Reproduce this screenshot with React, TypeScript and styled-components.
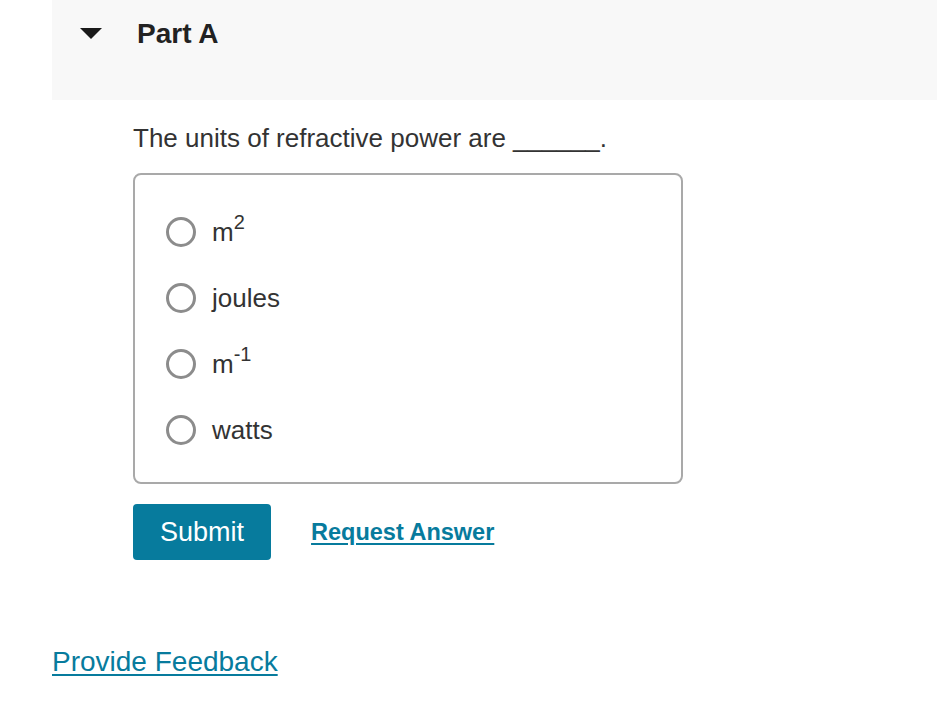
import React from 'react'
import styled, { createGlobalStyle } from 'styled-components'

const GlobalStyle = createGlobalStyle`
  body {
    margin: 0;
    background: #ffffff;
    font-family: "Liberation Sans", Arial, sans-serif;
    color: #333333;
  }
`

const Page = styled.div`
  padding-left: 52px;
`

const PartHeader = styled.div`
  display: flex;
  align-items: flex-start;
  height: 100px;
  box-sizing: border-box;
  padding: 18px 0 0 28px;
  background: #f8f8f8;
`

const Caret = styled.svg`
  width: 22px;
  height: 11px;
  margin-top: 10px;
  flex-shrink: 0;
`

const PartTitle = styled.h2`
  margin: 0 0 0 35px;
  font-size: 28px;
  line-height: 32px;
  font-weight: bold;
  color: #222222;
`

const Body = styled.div`
  padding-left: 81px;
`

const Question = styled.p`
  margin: 22px 0 0;
  font-size: 26px;
  line-height: 32px;
  color: #333333;
`

const Choices = styled.div`
  width: 550px;
  box-sizing: border-box;
  margin-top: 19px;
  padding: 24px 0 19px 31px;
  border: 2px solid #a9a9a9;
  border-radius: 8px;
`

const Choice = styled.label`
  display: flex;
  align-items: center;
  height: 66px;
  font-size: 26px;
  color: #333333;
  cursor: pointer;
`

const Radio = styled.span`
  width: 30px;
  height: 30px;
  box-sizing: border-box;
  border: 3px solid #8c8c8c;
  border-radius: 50%;
  margin-right: 16px;
  flex-shrink: 0;
`

const Sup = styled.sup`
  font-size: 20px;
  line-height: 0;
  vertical-align: 12px;
`

const Actions = styled.div`
  display: flex;
  align-items: center;
  gap: 40px;
  margin-top: 20px;
`

const SubmitButton = styled.button`
  height: 56px;
  padding: 0 27px;
  border: none;
  border-radius: 4px;
  background: #077b9d;
  color: #ffffff;
  font-family: "Liberation Sans", Arial, sans-serif;
  font-size: 27px;
  cursor: pointer;
`

const TextLink = styled.a<{ $bold?: boolean; $size: number }>`
  color: #077b9d;
  font-size: ${p => p.$size}px;
  font-weight: ${p => (p.$bold ? 'bold' : 'normal')};
  text-decoration: underline;
  text-underline-offset: 3px;
  cursor: pointer;
`

const Feedback = styled.div`
  margin-top: 86px;
  line-height: 32px;
`

const options: { text: string; sup?: string }[] = [
  { text: 'm', sup: '2' },
  { text: 'joules' },
  { text: 'm', sup: '-1' },
  { text: 'watts' },
]

export default function App() {
  return (
    <Page>
      <GlobalStyle />
      <PartHeader>
        <Caret viewBox="0 0 22 11">
          <polygon points="0,0 22,0 11,11" fill="#1a1a1a" />
        </Caret>
        <PartTitle>Part A</PartTitle>
      </PartHeader>
      <Body>
        <Question>The units of refractive power are ______.</Question>
        <Choices>
          {options.map((o, i) => (
            <Choice key={i}>
              <Radio />
              <span>
                {o.text}
                {o.sup && <Sup>{o.sup}</Sup>}
              </span>
            </Choice>
          ))}
        </Choices>
        <Actions>
          <SubmitButton>Submit</SubmitButton>
          <TextLink $bold $size={23.5}>Request Answer</TextLink>
        </Actions>
      </Body>
      <Feedback>
        <TextLink $size={28}>Provide Feedback</TextLink>
      </Feedback>
    </Page>
  )
}
